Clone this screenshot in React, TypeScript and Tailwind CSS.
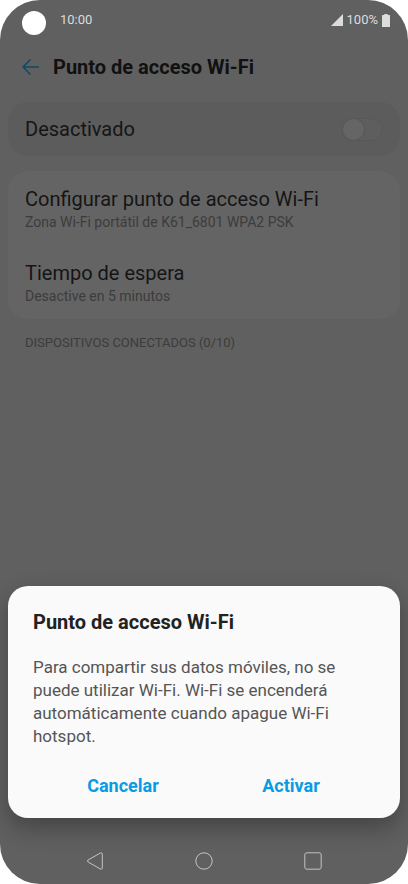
import React from "react";

function StatusBar() {
  return (
    <header className="flex h-10 items-center pr-[18px] pl-[22px] text-[13px] leading-4 text-[#dcdcdc]">
      <span className="mt-1.5 size-6 rounded-full bg-white" />
      <time className="ml-3.5">10:00</time>
      <div className="ml-auto flex items-center">
        <svg className="h-3 w-3" viewBox="0 0 12 12" fill="currentColor" aria-hidden="true">
          <path d="M12 0v12H0z" />
        </svg>
        <span className="mx-1">100%</span>
        <svg className="h-[13px] w-2" viewBox="0 0 8 13" fill="currentColor" aria-hidden="true">
          <path d="M2.3 0h3.4v1H7.5q.5 0 .5.5v11q0 .5-.5.5h-7q-.5 0-.5-.5v-11Q0 1 .5 1h1.800z" />
        </svg>
      </div>
    </header>
  );
}

function SettingItem({ title, detail }: { title: string; detail: string }) {
  return (
    <button type="button" className="block w-full text-left">
      <span className="block text-xl leading-6 text-[#151515]">{title}</span>
      <span className="block text-sm leading-[22px] text-[#3c3c3c]">{detail}</span>
    </button>
  );
}

function Dialog() {
  return (
    <section
      role="dialog"
      aria-labelledby="dialog-title"
      className="mx-2 rounded-[20px] bg-[#fafafa] px-[25px] pt-6 pb-5 shadow-[0_10px_24px_rgba(0,0,0,0.3)]"
    >
      <h2 id="dialog-title" className="text-xl leading-6 font-bold text-[#222]">
        Punto de acceso Wi-Fi
      </h2>
      <p className="mt-[22px] pr-4 text-[17px] leading-[23px] text-[#555]">
        Para compartir sus datos móviles, no se puede utilizar Wi-Fi. Wi-Fi se encenderá
        automáticamente cuando apague Wi-Fi hotspot.
      </p>
      <div className="mt-[26px] grid grid-cols-2 pl-1.5 text-lg leading-6 font-bold text-[#0a9be3]">
        <button type="button">Cancelar</button>
        <button type="button">Activar</button>
      </div>
    </section>
  );
}

function NavBar() {
  return (
    <nav className="mt-[34px] mb-3.5 flex items-center justify-between px-[86px] text-[#c4c4c4]">
      <button type="button" aria-label="Atrás">
        <svg className="size-[18px]" viewBox="0 0 18 18" fill="none" stroke="currentColor" strokeLinejoin="round">
          <path d="M14.600.9 2.200 7.900q-1.400 1.100 0 2.200l12.400 7q1.600.5 1.700-1.200V2.100q-.1-1.700-1.700-1.200z" />
        </svg>
      </button>
      <button type="button" aria-label="Inicio">
        <svg className="size-[18px]" viewBox="0 0 18 18" fill="none" stroke="currentColor">
          <circle cx="9" cy="9" r="8.200" />
        </svg>
      </button>
      <button type="button" aria-label="Recientes">
        <svg className="size-[18px]" viewBox="0 0 18 18" fill="none" stroke="currentColor">
          <rect x=".8" y=".8" width="16.400" height="16.400" rx="2" />
        </svg>
      </button>
    </nav>
  );
}

export default function App() {
  return (
    <div className="bg-white font-[Roboto,sans-serif]">
      <div className="flex min-h-screen flex-col overflow-hidden rounded-[40px] bg-[#606060]">
        <StatusBar />
        <div className="flex h-[62px] items-center pb-2 pl-[22px]">
          <button type="button" aria-label="Volver" className="text-[#0c4a67]">
            <svg className="h-4 w-[17px]" viewBox="0 0 17 16" fill="none" stroke="currentColor" strokeWidth="1.500">
              <path d="M8.500.5 1 8l7.500 7.500M1 8h16" />
            </svg>
          </button>
          <h1 className="ml-3.5 text-xl leading-6 font-bold text-[#111]">Punto de acceso Wi-Fi</h1>
        </div>

        <main className="flex flex-col px-2">
          <label className="flex h-[54px] items-center justify-between rounded-[20px] bg-[#5c5c5c] pr-[17px] pl-[17px] text-xl leading-6 text-[#151515]">
            Desactivado
            <span className="relative flex">
              <input type="checkbox" role="switch" className="peer sr-only" />
              <span className="flex h-[23px] w-[41px] rounded-full border border-[#585858] bg-[#5e5e5e] peer-checked:justify-end">
                <span className="size-[21px] rounded-full bg-[#656565] shadow-[0_0_1px_1px_#595959]" />
              </span>
            </span>
          </label>
          <div className="mt-[15px] flex flex-col gap-7 rounded-[20px] bg-[#646464] px-[17px] pt-4 pb-3">
            <SettingItem
              title="Configurar punto de acceso Wi-Fi"
              detail="Zona Wi-Fi portátil de K61_6801 WPA2 PSK"
            />
            <SettingItem title="Tiempo de espera" detail="Desactive en 5 minutos" />
          </div>
          <h2 className="mt-3.5 px-[17px] text-[13px] leading-5 text-[#3c3c3c]">
            DISPOSITIVOS CONECTADOS (0/10)
          </h2>
        </main>

        <div className="mt-auto">
          <Dialog />
          <NavBar />
        </div>
      </div>
    </div>
  );
}
